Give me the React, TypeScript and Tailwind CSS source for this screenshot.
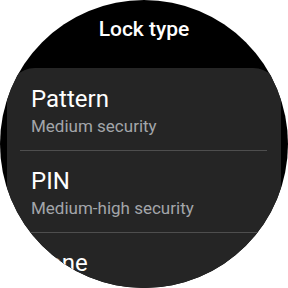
import React from "react";

const items = [
  { title: "Pattern", sub: "Medium security" },
  { title: "PIN", sub: "Medium-high security" },
  { title: "None", sub: "No security" },
];

export default function App() {
  return (
    <div className="w-[288px] h-[288px] bg-white" style={{ fontFamily: "Roboto, 'Liberation Sans', sans-serif" }}>
      <div className="w-[288px] h-[288px] rounded-full overflow-hidden bg-black flex flex-col">
        <div className="pt-[17px] text-center text-white text-[21px] leading-[25px] font-medium">Lock type</div>
        <div className="mt-[26px] mx-[7px] rounded-t-[28px] bg-[#252525] pt-[1px] flex-1">
          {items.map((it, i) => (
            <div key={it.title}>
              <div className="pl-[24px] pt-[16px] pb-[13px]">
                <div className="text-white text-[24px] leading-[28px]">{it.title}</div>
                <div className="mt-[2px] text-[#a3a6aa] text-[17px] leading-[22px]">{it.sub}</div>
              </div>
              {i < items.length - 1 && <div className="ml-[13px] mr-[14px] h-px bg-[#4e4e4e]" />}
            </div>
          ))}
        </div>
      </div>
    </div>
  );
}
